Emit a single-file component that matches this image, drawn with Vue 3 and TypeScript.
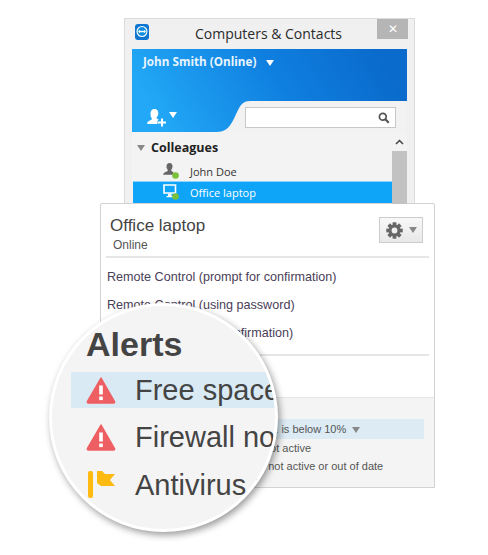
<template>
  <div class="stage">
    <div class="window">
      <div class="titlebar">
        <svg class="logo" width="16" height="18" viewBox="0 0 16 18">
          <rect x="1" y="1" width="14" height="16" rx="3" fill="#0e76d0" />
          <circle cx="8" cy="8.500" r="5.500" fill="#fff" />
          <circle cx="8" cy="8.500" r="4.400" fill="#0e8ee0" />
          <path d="M4 8.500l2-1.800v1h4v-1l2 1.800-2 1.800v-1H6v1z" fill="#fff" />
        </svg>
        <span class="title">Computers &amp; Contacts</span>
        <span class="close">✕</span>
      </div>
      <div class="blue">
        <div class="user">John Smith (Online) <i class="tri tri-white user-tri"></i></div>
        <svg class="swoosh" width="275" height="31" viewBox="0 0 275 31" preserveAspectRatio="none">
          <path d="M275 0H118C112 0 109 3 106 9 101 19 98 31 85 31H275Z" fill="#f2f2f2" />
        </svg>
        <div class="tools">
          <svg width="19" height="19" viewBox="0 0 19 19">
            <path d="M7.500 1c2.600 0 4 2 3.800 4.400-.1 1.700-.8 3-1.600 3.800v1.300l2 1-1.200 1.200v3.300H1c-.6 0-1-.5-.8-1 .5-1.700 2.600-2.600 4.600-3.500v-1.300C3.900 9.300 3.500 7.800 3.500 5.700 3.500 3 5 1 7.500 1z" fill="#fff" />
            <path d="M14 10.500h2v3h3v2h-3v3h-2v-3h-3v-2h3z" fill="#fff" />
          </svg>
          <i class="tri tri-white add-tri"></i>
        </div>
        <div class="search">
          <svg width="12" height="12" viewBox="0 0 12 12">
            <circle cx="4.800" cy="4.800" r="3.400" fill="none" stroke="#555" stroke-width="1.700" />
            <path d="M7.300 7.300l3.500 3.500" stroke="#555" stroke-width="2.200" />
          </svg>
        </div>
      </div>
      <div class="list">
        <div class="rows">
          <div class="group"><i class="tri tri-gray group-tri"></i>Colleagues</div>
          <div class="row">
            <span class="row-icon">
              <svg width="17" height="17" viewBox="0 0 17 17">
                <path d="M6.500 0C8.600 0 9.700 1.600 9.500 3.500 9.400 5 8.900 6 8.300 6.700v1.200l2 1v2.800H0C.3 9.900 2.500 9 4.700 8V6.700C4 6 3.500 4.900 3.500 3.500 3.500 1.500 4.500 0 6.500 0z" fill="#666" />
                <circle cx="12.500" cy="12.500" r="3.300" fill="#7cc13a" />
              </svg>
            </span>
            John Doe
          </div>
          <div class="row selected">
            <span class="row-icon">
              <svg width="17" height="17" viewBox="0 0 17 17">
                <path d="M1 1h11.500v8H1z" fill="none" stroke="#fff" stroke-width="1.600" />
                <path d="M5 9.500h3.500V12H10v1.300H3.500V12H5z" fill="#fff" />
                <circle cx="12.500" cy="12.500" r="3.300" fill="#7cc13a" />
              </svg>
            </span>
            Office laptop
          </div>
        </div>
        <div class="scrollbar">
          <div class="scroll-up">
            <svg width="9" height="6" viewBox="0 0 9 6"><path d="M1 5l3.500-3.500L8 5" fill="none" stroke="#444" stroke-width="1.500" /></svg>
          </div>
          <div class="scroll-thumb"></div>
        </div>
      </div>
    </div>

    <div class="panel">
      <div class="panel-head">
        <div>
          <div class="panel-name">Office laptop</div>
          <div class="panel-status">Online</div>
        </div>
        <button class="gear-btn">
          <svg width="17" height="17" viewBox="0 0 17 17">
            <rect
              v-for="angle in teeth"
              :key="angle"
              x="6.600"
              y="0.300"
              width="3.800"
              height="4"
              fill="#666"
              :transform="`rotate(${angle} 8.500 8.500)`"
            />
            <circle cx="8.500" cy="8.500" r="4.400" fill="none" stroke="#666" stroke-width="3" />
          </svg>
          <i class="tri tri-gray gear-tri"></i>
        </button>
      </div>
      <div class="actions">
        <div v-for="action in actions" :key="action" class="action">{{ action }}</div>
      </div>
      <div class="spacer"></div>
      <div class="alerts">
        <div class="alert-row alert-active">Free space on C: is below 10% <i class="tri tri-gray alert-tri"></i></div>
        <div class="alert-row">Firewall not active</div>
        <div class="alert-row">Antivirus not active or out of date</div>
      </div>
    </div>

    <div class="lens">
      <div class="lens-title">Alerts</div>
      <div v-for="alert in lensAlerts" :key="alert.text" class="lens-row" :class="{ 'lens-active': alert.active }">
        <svg v-if="alert.kind === 'error'" class="lens-icon" width="30" height="28" viewBox="0 0 30 28">
          <path d="M15 2 28.500 25.500a1 1 0 0 1-.8 1.500H2.300a1 1 0 0 1-.8-1.500z" fill="#ee5f63" stroke="#ee5f63" stroke-width="1.500" stroke-linejoin="round" />
          <rect x="13.200" y="9.500" width="3.600" height="9" fill="#fff" />
          <rect x="13.200" y="20.500" width="3.600" height="3.600" fill="#fff" />
        </svg>
        <svg v-else class="lens-icon" width="30" height="28" viewBox="0 0 30 28">
          <rect x="2" y="0" width="5" height="27" rx="2" fill="#fdbb11" />
          <path d="M11 0h5l3 3h10l-5 6 5 6H15l-4-3z" fill="#fdbb11" />
        </svg>
        <span class="lens-text">{{ alert.text }}</span>
      </div>
    </div>
  </div>
</template>

<script setup lang="ts">
interface LensAlert {
  text: string
  kind: 'error' | 'warning'
  active?: boolean
}

const teeth = [0, 45, 90, 135, 180, 225, 270, 315]

const actions = [
  'Remote Control (prompt for confirmation)',
  'Remote Control (using password)',
  'Meeting (prompt for confirmation)',
]

const lensAlerts: LensAlert[] = [
  { text: 'Free space on C: is below 10%', kind: 'error', active: true },
  { text: 'Firewall not active', kind: 'error' },
  { text: 'Antivirus not active', kind: 'warning' },
]
</script>

<style>
html,
body {
  background: #fff;
}
</style>

<style scoped>
.stage {
  position: relative;
  width: 488px;
  height: 555px;
  overflow: hidden;
  padding-top: 18px;
  box-sizing: border-box;
  font-family: "Liberation Sans", Arial, sans-serif;
}

.tri {
  display: inline-block;
  width: 0;
  height: 0;
  border-style: solid;
  border-color: transparent;
  border-width: 6px 4px 0;
}
.tri-white {
  border-top-color: #fff;
}
.tri-gray {
  border-top-color: #888;
}

.window {
  width: 291px;
  height: 186px;
  margin-left: 124px;
  box-sizing: border-box;
  border: 1px solid #dcdcdc;
  border-bottom: 0;
  background: #f0f0f0;
  padding: 0 7px;
  overflow: hidden;
}

.titlebar {
  position: relative;
  height: 30px;
  display: flex;
  justify-content: center;
  align-items: center;
}
.logo {
  position: absolute;
  left: 2px;
  top: 4px;
}
.title {
  font-family: "Open Sans", sans-serif;
  font-size: 14px;
  color: #2b2b2b;
  margin-top: -1px;
  margin-right: 2px;
}
.close {
  position: absolute;
  right: -1px;
  top: 0;
  width: 31px;
  height: 20px;
  background: #b5b5b5;
  color: #fff;
  font-size: 12px;
  line-height: 20px;
  text-align: center;
}

.blue {
  position: relative;
  height: 83px;
  background: linear-gradient(60deg, #22a8f6 10%, #0f7fdf 55%, #0a6bcc 90%);
}
.user {
  padding: 4px 0 0 11px;
  font-family: "Open Sans", sans-serif;
  font-size: 11.700px;
  font-weight: 700;
  color: #e8f4fd;
}
.user-tri {
  margin-left: 7px;
}
.swoosh {
  position: absolute;
  left: 0;
  bottom: 0;
}
.tools {
  position: absolute;
  left: 15px;
  bottom: 5px;
  display: flex;
  align-items: center;
}
.add-tri {
  margin: 0 0 5px 3px;
}
.search {
  position: absolute;
  left: 113px;
  top: 58px;
  width: 151px;
  height: 21px;
  box-sizing: border-box;
  border: 1px solid #c8c8c8;
  background: #fff;
  display: flex;
  align-items: center;
  justify-content: flex-end;
  padding-right: 5px;
}

.list {
  display: flex;
  background: #f3f3f3;
  height: 72px;
}
.rows {
  width: 259px;
  font-family: "Open Sans", sans-serif;
  font-size: 11px;
  color: #333;
  padding-left: 1px;
}
.group {
  height: 28px;
  display: flex;
  align-items: center;
  padding: 3px 0 0 4px;
  box-sizing: border-box;
  font-size: 12.500px;
  font-weight: 700;
  color: #222;
}
.group-tri {
  margin-right: 6px;
}
.row {
  height: 22px;
  display: flex;
  align-items: center;
}
.row-icon {
  padding-left: 30px;
  width: 27px;
  display: flex;
}
.selected {
  background: #0ea5f9;
  color: #fff;
  border-top: 1px solid #8fd5fb;
  height: 21px;
  margin-top: -1px;
}
.scrollbar {
  width: 15px;
  display: flex;
  flex-direction: column;
}
.scroll-up {
  height: 19px;
  display: flex;
  align-items: center;
  justify-content: center;
}
.scroll-thumb {
  flex: 1;
  background: #c2c2c2;
}

.panel {
  width: 335px;
  height: 285px;
  margin-left: 100px;
  margin-top: -1px;
  box-sizing: border-box;
  border: 1px solid #d2d2d2;
  border-radius: 2px 2px 0 0;
  background: #fff;
  display: flex;
  flex-direction: column;
}
.panel-head {
  margin: 0 5px;
  height: 54px;
  padding: 11px 6px 0 4px;
  box-sizing: border-box;
  border-bottom: 2px solid #e6e6e6;
  display: flex;
  justify-content: space-between;
  align-items: flex-start;
}
.panel-name {
  font-size: 17px;
  line-height: 22px;
  color: #444;
}
.panel-status {
  font-size: 12px;
  line-height: 16px;
  color: #555;
  margin-left: 3px;
}
.gear-btn {
  width: 44px;
  height: 26px;
  margin: 2px 0 0;
  padding: 0 0 0 6px;
  border: 1px solid #ccc;
  background: linear-gradient(#f8f8f8, #e8e8e8);
  display: flex;
  align-items: center;
}
.gear-tri {
  margin-left: 6px;
}
.actions {
  margin: 0 5px;
  padding: 5px 0 7px;
  border-bottom: 2px solid #e6e6e6;
}
.action {
  height: 28px;
  line-height: 28px;
  padding-left: 1px;
  font-size: 12.600px;
  color: #4a4058;
}
.spacer {
  height: 41px;
}
.alerts {
  flex: 1;
  background: #f4f4f4;
  border-top: 1px solid #e6e6e6;
  padding-top: 21px;
  font-size: 11px;
  color: #555;
}
.alert-row {
  height: 18px;
  line-height: 18px;
  margin-right: 10px;
  padding-left: 122px;
}
.alert-active {
  height: 20px;
  line-height: 20px;
  padding-left: 93px;
  background: #dcebf4;
}
.alert-tri {
  margin-left: 3px;
}

.lens {
  position: absolute;
  left: 49px;
  top: 303px;
  width: 229px;
  height: 229px;
  box-sizing: border-box;
  border: 3px solid #fff;
  border-radius: 50%;
  background: #f4f4f4;
  box-shadow: 2px 3px 7px rgba(0, 0, 0, 0.4);
  overflow: hidden;
  padding-top: 16px;
  font-size: 29px;
  color: #444;
}
.lens-title {
  font-size: 34px;
  line-height: 44px;
  font-weight: 700;
  padding-left: 34px;
  margin-bottom: 6px;
}
.lens-row {
  height: 36px;
  margin-bottom: 11px;
  padding-left: 15px;
  margin-left: 19px;
  display: flex;
  align-items: center;
  white-space: nowrap;
}
.lens-row:last-child {
  margin-top: 12px;
}
.lens-active {
  background: #d9eaf4;
}
.lens-icon {
  flex: none;
}
.lens-text {
  margin-left: 19px;
}
</style>
